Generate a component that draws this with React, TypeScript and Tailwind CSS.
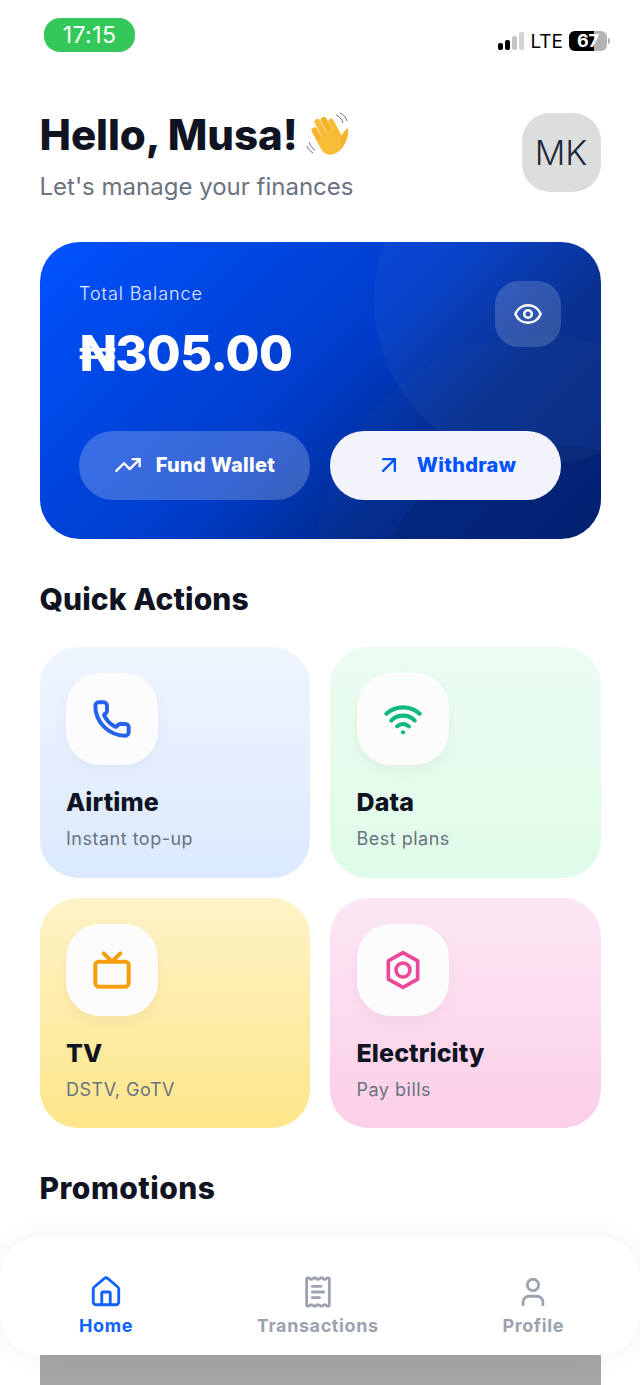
import { ArrowUpRight, Eye, House, Phone, ReceiptText, TrendingUp, Tv, User, Wifi } from "lucide-react";
import type { ReactNode } from "react";

function WaveHand() {
    return (
        <svg width="46" height="46" viewBox="0 0 46 46" className="shrink-0">
            <g transform="rotate(-28 24 26)">
                <rect x="11" y="9" width="6" height="22" rx="3" fill="#f6b42c" />
                <rect x="17.5" y="3" width="6" height="26" rx="3" fill="#f8bd36" />
                <rect x="24" y="4" width="6" height="25" rx="3" fill="#f6b42c" />
                <rect x="30" y="9" width="5.5" height="22" rx="2.7" fill="#f8bd36" />
                <rect x="11" y="19" width="24" height="23" rx="10" fill="#f8bd36" />
            </g>
            <path d="M34 27 C36 22 38 19 42 16 C43 21 41 30 36 36 Z" fill="#f6b42c" />
            <path d="M30 3 C33 4 36 7 37 11 M34 1 C37 2 40 5 41 9" fill="none" stroke="#6b7280" strokeWidth="1" />
            <path d="M3 30 C4 33 6 36 9 38 M1 34 C2 37 4 39 7 41" fill="none" stroke="#6b7280" strokeWidth="1" />
        </svg>
    );
}

function SignalBars() {
    return (
        <div className="flex items-end gap-[2px]">
            <div className="w-[5px] h-[7px] rounded-[2px] bg-black" />
            <div className="w-[5px] h-[10px] rounded-[2px] bg-black" />
            <div className="w-[5px] h-[14px] rounded-[2px] bg-[#c4c4c6]" />
            <div className="w-[5px] h-[18px] rounded-[2px] bg-[#d4d4d6]" />
        </div>
    );
}

function Battery() {
    return (
        <div className="flex items-center gap-[1px]">
            <div className="relative w-[38px] h-[20px] rounded-[6px] overflow-hidden bg-[#b4b4b8]">
                <div className="absolute left-0 top-0 bottom-0 w-[25px] bg-black" />
                <span className="absolute inset-0 flex items-center justify-center text-white text-[18px] font-bold leading-none">67</span>
            </div>
            <div className="w-[2px] h-[6px] rounded-r-full bg-[#b4b4b8]" />
        </div>
    );
}

function HexNut() {
    return (
        <svg width="44" height="44" viewBox="0 0 24 24" fill="none" stroke="#ec4899" strokeWidth="2" strokeLinejoin="round">
            <path d="M12 2.5 20 7v10l-8 4.5L4 17V7z" />
            <circle cx="12" cy="12" r="3.8" />
        </svg>
    );
}

function ActionCard({ title, sub, icon, bg }: { title: string; sub: string; icon: ReactNode; bg: string }) {
    return (
        <div className={`h-[230.5px] rounded-[38px] pt-[26px] px-[26.5px] ${bg}`}>
            <div className="w-[92px] h-[92px] rounded-[34px] bg-[#fcfcfc] flex items-center justify-center shadow-[0_6px_14px_rgba(0,0,0,0.04)]">
                {icon}
            </div>
            <div className="mt-[19px] text-[25px] leading-[36px] font-extrabold text-[#0f1322] tracking-[0.1px]">{title}</div>
            <div className="mt-[1px] text-[18px] leading-[36px] text-[#6b7280] tracking-[0.5px]">{sub}</div>
        </div>
    );
}

function NavItem({ label, icon, active }: { label: string; icon: ReactNode; active?: boolean }) {
    return (
        <div className={`flex flex-col items-center gap-[5px] ${active ? "text-[#0f62fe]" : "text-[#9ca3af]"}`}>
            {icon}
            <span className="text-[18px] leading-[24px] font-bold tracking-[0.6px]">{label}</span>
        </div>
    );
}

export default function App() {
    return (
        <div className="relative w-[640px] h-[1385px] overflow-hidden bg-white font-['Inter',sans-serif]">
            {/* status bar */}
            <div className="flex items-start justify-between pl-[44px] pr-[30px] pt-[18px]">
                <div className="w-[91px] h-[34px] rounded-[16px] bg-[#34c759] text-white text-[23px] leading-[34px] text-center tracking-[0.4px]">17:15</div>
                <div className="flex items-center gap-[6px] pt-[12px]">
                    <SignalBars />
                    <span className="pt-[2px] text-[19px] leading-[20px] text-black">LTE</span>
                    <Battery />
                </div>
            </div>

            <div className="px-[39.5px]">
                {/* greeting */}
                <div className="flex items-start justify-between mt-[61px]">
                    <div>
                        <div className="flex items-center gap-[8px] h-[44px]">
                            <span className="text-[42px] leading-[44px] font-extrabold text-[#0f1322] tracking-[-0.05px]">Hello, Musa!</span>
                            <WaveHand />
                        </div>
                        <div className="mt-[12px] text-[24px] leading-[36px] text-[#6b7280]">Let's manage your finances</div>
                    </div>
                    <div className="w-[79px] h-[79px] rounded-[28px] bg-[#dcdddd] flex items-center justify-center text-[34px] font-light text-[#1f2937]">MK</div>
                </div>

                {/* balance card */}
                <div className="relative mt-[37px] h-[297px] rounded-[40px] overflow-hidden bg-[linear-gradient(135deg,#0052ff_0%,#003cc8_50%,#002a8c_70%,#001f78_100%)] p-[39.5px]">
                    <div className="absolute left-[334px] top-[-107px] w-[330px] h-[330px] rounded-full bg-white/[0.035]" />
                    <div className="absolute left-[276px] top-[94px] w-[448px] h-[448px] rounded-full bg-white/[0.015]" />
                    <div className="absolute left-[320px] top-[203px] w-[390px] h-[390px] rounded-full bg-black/[0.08]" />
                    <div className="relative flex items-start justify-between">
                        <div>
                            <div className="mt-[-2px] text-[18px] leading-[28px] font-light text-white/90 tracking-[0.9px]">Total Balance</div>
                            <div className="mt-[15px] text-[49px] leading-[62px] font-extrabold text-white tracking-[-0.6px]">₦305.00</div>
                        </div>
                        <div className="mt-[-1px] w-[66px] h-[66px] rounded-[24px] bg-white/[0.17] flex items-center justify-center">
                            <Eye size={30} strokeWidth={2} className="text-white" />
                        </div>
                    </div>
                    <div className="relative mt-[46px] flex gap-[20px]">
                        <div className="flex-1 h-[69px] rounded-[34px] bg-white/[0.22] flex items-center justify-center gap-[14px] text-white text-[20px] font-extrabold tracking-[0.3px]">
                            <TrendingUp size={28} strokeWidth={2} />
                            <span>Fund Wallet</span>
                        </div>
                        <div className="flex-1 h-[69px] rounded-[34px] bg-[#f3f4fb] flex items-center justify-center gap-[14px] text-[#0052ff] text-[20px] font-extrabold tracking-[0.3px]">
                            <ArrowUpRight size={28} strokeWidth={2} />
                            <span>Withdraw</span>
                        </div>
                    </div>
                </div>

                {/* quick actions */}
                <div className="mt-[38px] text-[30px] leading-[44px] font-extrabold text-[#0f1322] tracking-[0.1px]">Quick Actions</div>
                <div className="mt-[26px] grid grid-cols-2 gap-x-[20px] gap-y-[20px]">
                    <ActionCard
                        title="Airtime"
                        sub="Instant top-up"
                        bg="bg-[linear-gradient(180deg,#eff5ff,#dbe9fe)]"
                        icon={<Phone size={40} strokeWidth={2.4} className="text-[#2563eb]" />}
                    />
                    <ActionCard
                        title="Data"
                        sub="Best plans"
                        bg="bg-[linear-gradient(180deg,#ecfcf2,#dffbe9)]"
                        icon={<Wifi size={40} strokeWidth={2.5} className="text-[#10b981]" />}
                    />
                    <ActionCard
                        title="TV"
                        sub="DSTV, GoTV"
                        bg="bg-[linear-gradient(180deg,#fef3c7,#fde68a)]"
                        icon={<Tv size={40} strokeWidth={2.4} className="text-[#f59e0b]" />}
                    />
                    <ActionCard
                        title="Electricity"
                        sub="Pay bills"
                        bg="bg-[linear-gradient(180deg,#fce7f3,#fbcfe8)]"
                        icon={<HexNut />}
                    />
                </div>

                {/* promotions */}
                <div className="mt-[38px] text-[30px] leading-[44px] font-extrabold text-[#0f1322] tracking-[0.5px]">Promotions</div>
                <div className="mt-[39px] h-[200px] bg-[#a5a5a5]" />
            </div>

            {/* bottom nav floats over the promo */}
            <div className="absolute left-0 right-0 top-[1237px] h-[118px] rounded-[40px] bg-white shadow-[0_0_30px_rgba(0,0,0,0.06)] flex items-start justify-between pt-[38px] pl-[79px] pr-[76px]">
                <NavItem label="Home" active icon={<House size={34} strokeWidth={2} />} />
                <NavItem label="Transactions" icon={<ReceiptText size={34} strokeWidth={2} />} />
                <NavItem label="Profile" icon={<User size={34} strokeWidth={2} />} />
            </div>
        </div>
    );
}
